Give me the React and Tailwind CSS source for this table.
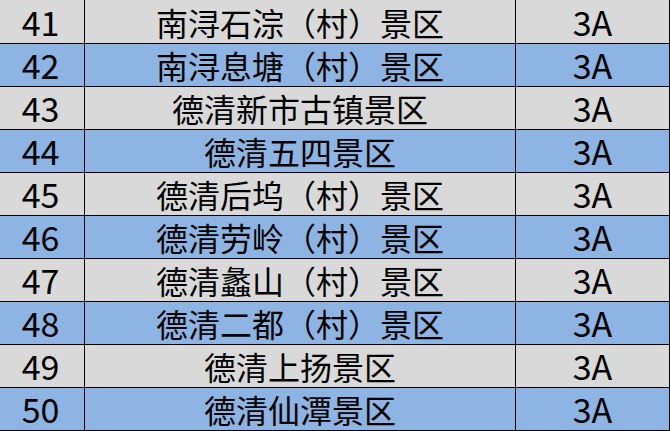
const ROWS = [
  ['41', '南浔石淙（村）景区', '3A'],
  ['42', '南浔息塘（村）景区', '3A'],
  ['43', '德清新市古镇景区', '3A'],
  ['44', '德清五四景区', '3A'],
  ['45', '德清后坞（村）景区', '3A'],
  ['46', '德清劳岭（村）景区', '3A'],
  ['47', '德清蠡山（村）景区', '3A'],
  ['48', '德清二都（村）景区', '3A'],
  ['49', '德清上扬景区', '3A'],
  ['50', '德清仙潭景区', '3A'],
]

export default function App() {
  return (
    <div
      className="w-[670px] h-[431px] overflow-hidden text-black text-[32px] leading-none"
      style={{ fontFamily: '"Noto Sans CJK SC", "Noto Sans", sans-serif' }}
    >
      {ROWS.map(([no, name, grade], i) => (
        <div
          key={no}
          className={`flex border-b border-black ${i === 0 ? 'h-[44px]' : 'h-[43px]'} ${i % 2 ? 'bg-[#8db4e2]' : 'bg-[#d9d9d9]'}`}
        >
          <div className="w-[85px] border-r border-black flex items-center justify-center pr-[3px] text-[34px]">{no}</div>
          <div className="w-[431px] border-r border-black flex items-center justify-center">{name}</div>
          <div className="w-[154px] border-r border-black flex items-center justify-center text-[34px]">{grade}</div>
        </div>
      ))}
    </div>
  )
}
